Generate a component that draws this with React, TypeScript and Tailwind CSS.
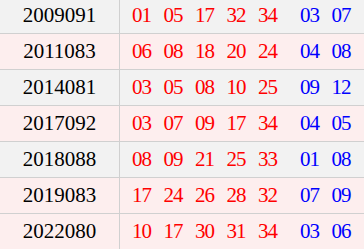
const rows = [
  { issue: '2009091', red: ['01', '05', '17', '32', '34'], blue: ['03', '07'], bg: 'bg-[#f2f2f2]' },
  { issue: '2011083', red: ['06', '08', '18', '20', '24'], blue: ['04', '08'], bg: 'bg-[#fdeeee]' },
  { issue: '2014081', red: ['03', '05', '08', '10', '25'], blue: ['09', '12'], bg: 'bg-[#f2f2f2]' },
  { issue: '2017092', red: ['03', '07', '09', '17', '34'], blue: ['04', '05'], bg: 'bg-[#fdeeee]' },
  { issue: '2018088', red: ['08', '09', '21', '25', '33'], blue: ['01', '08'], bg: 'bg-[#f2f2f2]' },
  { issue: '2019083', red: ['17', '24', '26', '28', '32'], blue: ['07', '09'], bg: 'bg-[#fdeeee]' },
  { issue: '2022080', red: ['10', '17', '30', '31', '34'], blue: ['03', '06'], bg: 'bg-[#fdeeee]' },
]

export default function App() {
  return (
    <div className="w-[364px] h-[249px] overflow-hidden bg-white">
      <div className="-mt-[2px] flex flex-col" style={{ fontFamily: '"Liberation Serif", serif' }}>
        {rows.map((r) => (
          <div key={r.issue} className={`flex h-[36px] border-b border-[#d0d0d0] ${r.bg}`}>
            <div className="flex w-[120px] shrink-0 items-center justify-center border-r border-[#d0d0d0] pt-[1px] text-[21px] text-black">
              {r.issue}
            </div>
            <div className="flex flex-1 items-center gap-[11.5px] pl-[12px] pt-[1px] text-[21px] tracking-[-1px]">
              {r.red.map((n, i) => (
                <span key={'r' + i} className="w-[20px] text-[#ff0000]">
                  {n}
                </span>
              ))}
              {r.blue.map((n, i) => (
                <span key={'b' + i} className={`w-[20px] text-[#0000ff] ${i === 0 ? 'ml-[10.5px]' : ''}`}>
                  {n}
                </span>
              ))}
            </div>
          </div>
        ))}
      </div>
    </div>
  )
}
